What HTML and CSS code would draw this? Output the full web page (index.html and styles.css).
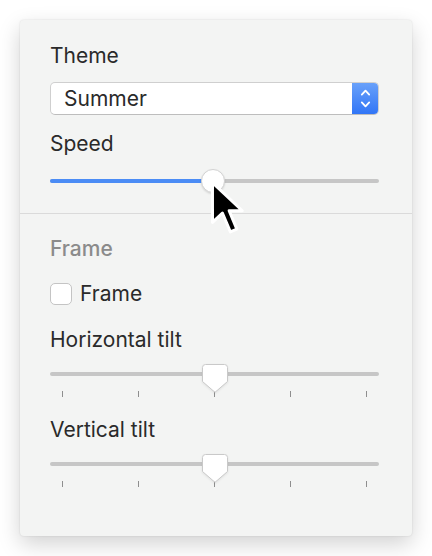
FILE: index.html
```html
<!DOCTYPE html>
<html>
  <head>
    <title>Screensaver options</title>
    <meta charset="utf-8" />
    <meta name="viewport" content="width=device-width, initial-scale=1.0" />
    <link rel="stylesheet" href="styles.css">
  </head>
  <body>
    <div class="panel">
      <section class="group">
        <div class="label">Theme</div>
        <div class="select">
          <span class="select-value">Summer</span>
          <span class="stepper">
            <svg width="27" height="33" viewBox="0 0 27 33">
              <path d="M9.8 12.6 L13.5 8.6 L17.2 12.6" fill="none" stroke="#fff" stroke-width="1.8" stroke-linecap="round" stroke-linejoin="round" />
              <path d="M9.8 20.4 L13.5 24.4 L17.2 20.4" fill="none" stroke="#fff" stroke-width="1.8" stroke-linecap="round" stroke-linejoin="round" />
            </svg>
          </span>
        </div>

        <div class="label speed-label">Speed</div>
        <div class="slider round" style="--value: 0.495">
          <div class="track"><div class="fill"></div></div>
          <div class="knob"></div>
          <svg class="cursor" width="41" height="60" viewBox="0 0 16.5 24">
            <path d="M1 1 L1 17 L5 13.2 L8.2 20.8 L10.8 19.7 L7.7 12.3 L13 12.3 Z" fill="#000" stroke="#fff" stroke-width="1.2" stroke-linejoin="round" />
          </svg>
        </div>
      </section>

      <hr class="divider" />

      <section class="group">
        <div class="heading">Frame</div>
        <label class="check">
          <span class="box"></span>
          Frame
        </label>

        <div class="label tilt-label">Horizontal tilt</div>
        <div class="slider ticked">
          <div class="track"></div>
          <svg class="pointer" width="26" height="29" viewBox="0 0 26 29">
            <path d="M3.5 0.5 H22.5 A3 3 0 0 1 25.5 3.5 V17.5 L13 28.3 L0.5 17.5 V3.5 A3 3 0 0 1 3.5 0.5 Z" fill="#fff" stroke="#c9c9c9" stroke-width="1" />
          </svg>
          <div class="ticks"><span></span><span></span><span></span><span></span><span></span></div>
        </div>

        <div class="label tilt-label second">Vertical tilt</div>
        <div class="slider ticked">
          <div class="track"></div>
          <svg class="pointer" width="26" height="29" viewBox="0 0 26 29">
            <path d="M3.5 0.5 H22.5 A3 3 0 0 1 25.5 3.5 V17.5 L13 28.3 L0.5 17.5 V3.5 A3 3 0 0 1 3.5 0.5 Z" fill="#fff" stroke="#c9c9c9" stroke-width="1" />
          </svg>
          <div class="ticks"><span></span><span></span><span></span><span></span><span></span></div>
        </div>
      </section>
    </div>
  </body>
</html>
```

FILE: styles.css
```css
body {
  margin: 0;
  background-color: #fff;
  font-family: Inter, "Noto Sans", sans-serif;
  font-size: 21px;
  line-height: 25px;
  color: #2a2a2a;
}

.panel {
  margin: 20px;
  width: 392px;
  height: 516px;
  box-sizing: border-box;
  padding: 23px 33px 0 30px;
  background-color: #f3f4f3;
  border-radius: 4px;
  box-shadow: 0 8px 22px rgba(0, 0, 0, 0.18), 0 0 2px rgba(0, 0, 0, 0.12);
}

.group {
  display: flex;
  flex-direction: column;
}

.select {
  display: flex;
  align-items: center;
  height: 33px;
  margin-top: 14px;
  box-sizing: border-box;
  background-color: #fff;
  border: 1px solid #cfcfcf;
  border-bottom-color: #bdbdbd;
  border-radius: 5px;
  overflow: hidden;
}

.select-value {
  flex-grow: 1;
  padding-left: 13px;
}

.stepper {
  display: flex;
  width: 27px;
  height: 33px;
  margin: -1px -1px -1px 0;
  background: linear-gradient(#6aa2fa, #2f74f6);
}

.speed-label {
  margin-top: 16px;
}

.slider {
  position: relative;
}

.track {
  height: 4px;
  border-radius: 2px;
  background-color: #c6c6c6;
}

.round {
  height: 26px;
  margin-top: 12px;
}

.round .track {
  margin-top: 11px;
}

.fill {
  height: 4px;
  border-radius: 2px;
  width: calc((100% - 24px) * var(--value) + 12px);
  background-color: #4b8cf5;
}

.knob {
  position: absolute;
  top: 1px;
  left: calc((100% - 24px) * var(--value));
  width: 24px;
  height: 24px;
  box-sizing: border-box;
  border-radius: 50%;
  background-color: #fff;
  border: 1px solid #d2d2d2;
  box-shadow: 0 1px 2px rgba(0, 0, 0, 0.12);
}

.cursor {
  position: absolute;
  top: 12px;
  left: 160px;
}

.divider {
  margin: 19px -33px 0 -30px;
  border: 0;
  border-top: 1px solid #dadada;
}

.heading {
  margin-top: 22px;
  font-weight: 500;
  color: #8b8b8b;
}

.check {
  display: flex;
  align-items: center;
  gap: 8px;
  margin-top: 20px;
}

.box {
  width: 22px;
  height: 22px;
  box-sizing: border-box;
  background-color: #fff;
  border: 1px solid #c4c4c4;
  border-radius: 5px;
}

.tilt-label {
  margin-top: 21px;
}

.tilt-label.second {
  margin-top: 19px;
}

.ticked {
  margin-top: 12px;
  height: 34px;
}

.ticked .track {
  margin-top: 8px;
}

.pointer {
  position: absolute;
  top: 0;
  left: calc(50% - 13px);
  filter: drop-shadow(0 1px 1px rgba(0, 0, 0, 0.08));
}

.ticks {
  display: flex;
  justify-content: space-between;
  padding: 0 12px;
  margin-top: 15px;
}

.ticks span {
  width: 1px;
  height: 6px;
  background-color: #8e8e8e;
}
```
